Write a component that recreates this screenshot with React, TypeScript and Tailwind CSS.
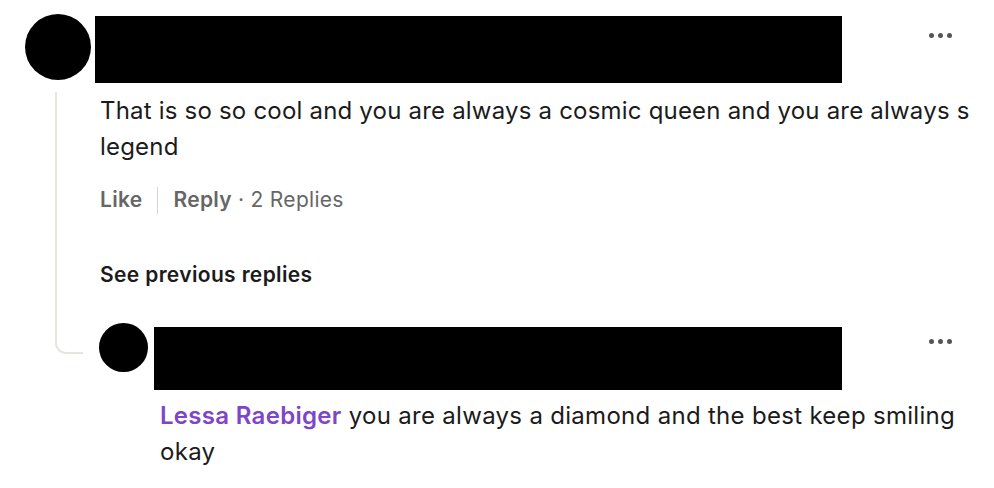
const font = { fontFamily: "Inter, 'Liberation Sans', sans-serif" };

function Dots({ className }: { className?: string }) {
  return (
    <div className={`flex gap-[4px] ${className ?? ""}`}>
      <span className="w-[5px] h-[5px] rounded-full bg-[#555]" />
      <span className="w-[5px] h-[5px] rounded-full bg-[#555]" />
      <span className="w-[5px] h-[5px] rounded-full bg-[#555]" />
    </div>
  );
}

export default function App() {
  return (
    <div
      className="w-[994px] h-[488px] bg-white flex pl-[25px] pt-[14px] text-[#1b1b1b]"
      style={font}
    >
      {/* avatar + thread connector */}
      <div className="w-[66px] flex flex-col shrink-0">
        <div className="w-[66px] h-[66px] rounded-full bg-black" />
        <div className="ml-[30px] mt-[12px] w-[28px] h-[262px] border-l-[2px] border-b-[2px] border-[#e8e5e0] rounded-bl-[11px]" />
      </div>

      {/* comment body */}
      <div className="ml-[9px] w-[878px] pt-[2px] flex flex-col">
        <div className="flex items-start">
          <div className="-ml-[5px] w-[747px] h-[67px] bg-black" />
          <Dots className="ml-auto mr-[26px] mt-[17px]" />
        </div>

        <p className="mt-[10px] text-[24px] leading-[36px] tracking-[0.2px]">
          That is so so cool and you are always a cosmic queen and you are always s legend
        </p>

        <div className="mt-[21px] flex items-center h-[28px] text-[21px] tracking-[0.3px] text-[#666]">
          <span className="font-semibold">Like</span>
          <span className="mx-[15px] w-px h-[27px] bg-[#d6d6d6]" />
          <span className="font-semibold">Reply</span>
          <span className="ml-[6px]">· 2 Replies</span>
        </div>

        <div className="mt-[47px] h-[28px] leading-[28px] text-[21px] tracking-[0.35px] font-semibold">
          See previous replies
        </div>

        {/* reply */}
        <div className="mt-[34px] flex -ml-[1px]">
          <div className="w-[49px] h-[49px] rounded-full bg-black shrink-0" />
          <div className="ml-[12px] flex-1 flex flex-col pt-[4px]">
            <div className="flex items-start">
              <div className="-ml-[6px] w-[688px] h-[63px] bg-black" />
              <Dots className="ml-auto mr-[26px] mt-[12px]" />
            </div>
            <p className="mt-[8px] text-[24px] leading-[36px] tracking-[0.3px] pr-[10px]">
              <span className="font-semibold text-[#7e45c8]">Lessa Raebiger</span> you are always a diamond and the best keep smiling okay
            </p>
          </div>
        </div>
      </div>
    </div>
  );
}
